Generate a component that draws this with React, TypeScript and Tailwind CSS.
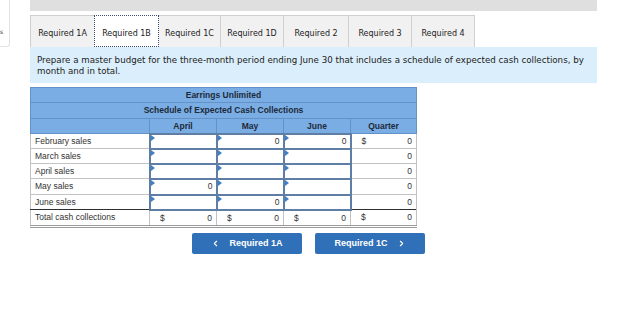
import { ChevronLeft, ChevronRight } from "lucide-react";

type Cell = { kind: "input" | "quarter"; value?: string; dollar?: boolean };
type Row = { label: string; h: string; cells: Cell[] };

const tabs = [
  { label: "Required 1A", w: "w-[65px]" },
  { label: "Required 1B", w: "w-[65px]", active: true },
  { label: "Required 1C", w: "w-[63px]" },
  { label: "Required 1D", w: "w-[64px]" },
  { label: "Required 2", w: "w-[66px]" },
  { label: "Required 3", w: "w-[64px]" },
  { label: "Required 4", w: "w-[64px]" },
];

const rows: Row[] = [
  {
    label: "February sales",
    h: "h-[15px]",
    cells: [
      { kind: "input" },
      { kind: "input", value: "0" },
      { kind: "input", value: "0" },
      { kind: "quarter", value: "0", dollar: true },
    ],
  },
  {
    label: "March sales",
    h: "h-[15px]",
    cells: [{ kind: "input" }, { kind: "input" }, { kind: "input" }, { kind: "quarter", value: "0" }],
  },
  {
    label: "April sales",
    h: "h-[15px]",
    cells: [{ kind: "input" }, { kind: "input" }, { kind: "input" }, { kind: "quarter", value: "0" }],
  },
  {
    label: "May sales",
    h: "h-[16px]",
    cells: [{ kind: "input", value: "0" }, { kind: "input" }, { kind: "input" }, { kind: "quarter", value: "0" }],
  },
  {
    label: "June sales",
    h: "h-[15px]",
    cells: [{ kind: "input" }, { kind: "input", value: "0" }, { kind: "input" }, { kind: "quarter", value: "0" }],
  },
];

function Flag() {
  return (
    <span className="absolute left-0 top-0 h-0 w-0 border-l-[4px] border-y-[3px] border-l-[#3f7fc4] border-y-transparent" />
  );
}

export default function App() {
  return (
    <div className="flex h-[331px] w-[635px] overflow-hidden bg-white text-[#222]">
      {/* left panel stub */}
      <div className="h-[47px] w-[10px] rounded-br-[3px] border-b border-r border-[#e2e2e2] pt-[29px] font-['DejaVu_Sans',sans-serif] text-[6px] leading-none">
        <span>s</span>
      </div>

      <div className="ml-[20px] flex w-[567px] flex-col">
        <div className="h-[11px] bg-[#dfdfdf]" />

        {/* tabs */}
        <div className="mt-[4px] flex h-[32px] font-['DejaVu_Sans',sans-serif] text-[8px]">
          {tabs.map((t, i) => (
            <div
              key={t.label}
              className={`${t.w} ${i > 0 ? "-ml-px" : ""} flex items-center justify-center pt-[5px] ${
                t.active
                  ? "relative z-10 border border-dotted border-[#3b4f73] bg-white"
                  : "border border-b-0 border-[#cfcfcf] bg-[#f1f1f1]"
              }`}
            >
              {t.label}
            </div>
          ))}
        </div>

        {/* instructions */}
        <div className="h-[36px] bg-[#dbeefb] px-[7px] pt-[8px] font-['DejaVu_Sans',sans-serif] text-[8.7px] leading-[11px]">
          Prepare a master budget for the three-month period ending June 30 that includes a schedule of expected cash
          collections, by month and in total.
        </div>

        {/* schedule */}
        <table className="mt-[4px] w-[386px] table-fixed border-collapse font-['Liberation_Sans',Arial,sans-serif] text-[8.5px] leading-none text-[#333]">
          <colgroup>
            <col className="w-[119px]" />
            <col className="w-[67px]" />
            <col className="w-[67px]" />
            <col className="w-[67px]" />
            <col className="w-[66px]" />
          </colgroup>
          <thead className="font-bold text-[#1d2a3a]">
            <tr className="h-[15px]">
              <th colSpan={5} className="border border-[#6392c8] bg-[#7aade3] text-center font-bold">
                Earrings Unlimited
              </th>
            </tr>
            <tr className="h-[16px]">
              <th colSpan={5} className="border border-[#6392c8] bg-[#7aade3] text-center font-bold">
                Schedule of Expected Cash Collections
              </th>
            </tr>
            <tr className="h-[15px]">
              <th className="border border-[#6392c8] bg-[#7aade3]" />
              <th className="border border-[#6392c8] bg-[#7aade3] font-bold">April</th>
              <th className="border border-[#6392c8] bg-[#7aade3] font-bold">May</th>
              <th className="border border-[#6392c8] bg-[#7aade3] font-bold">June</th>
              <th className="border border-[#6392c8] bg-[#7aade3] font-bold">Quarter</th>
            </tr>
          </thead>
          <tbody>
            {rows.map((r) => (
              <tr key={r.label} className={r.h}>
                <td className="border border-[#c3c3c3] pl-[4px]">{r.label}</td>
                {r.cells.map((c, i) =>
                  c.kind === "input" ? (
                    <td key={i} className="relative border-2 border-[#5e7ea5] bg-white p-0">
                      <Flag />
                      <div className="pr-[3px] text-right">{c.value ?? ""}</div>
                    </td>
                  ) : (
                    <td key={i} className="border border-[#c3c3c3] p-0">
                      <div className="flex justify-between pl-[10px] pr-[4px]">
                        <span>{c.dollar ? "$" : ""}</span>
                        <span>{c.value}</span>
                      </div>
                    </td>
                  )
                )}
              </tr>
            ))}
            <tr className="h-[17px]">
              <td className="border-x border-t border-b-[3px] border-x-[#c3c3c3] border-t-[#2e2e2e] border-b-[#9a9a9a] border-double pl-[4px]">
                Total cash collections
              </td>
              {[0, 1, 2, 3].map((i) => (
                <td
                  key={i}
                  className="border-x border-t border-b-[3px] border-x-[#c3c3c3] border-t-[#2e2e2e] border-b-[#9a9a9a] border-double p-0"
                >
                  <div className="flex justify-between pl-[10px] pr-[4px]">
                    <span>$</span>
                    <span>0</span>
                  </div>
                </td>
              ))}
            </tr>
          </tbody>
        </table>

        {/* navigation */}
        <div className="mt-[5px] flex gap-[13px] pl-[162px] font-['Liberation_Sans',Arial,sans-serif] text-[9px] font-bold text-white">
          <button className="flex h-[21px] w-[110px] items-center justify-center gap-[9px] rounded-[2px] bg-[#2f70b8]">
            <ChevronLeft size={9} strokeWidth={3} />
            <span>Required 1A</span>
          </button>
          <button className="flex h-[21px] w-[110px] items-center justify-center gap-[9px] rounded-[2px] bg-[#2f70b8]">
            <span>Required 1C</span>
            <ChevronRight size={9} strokeWidth={3} />
          </button>
        </div>
      </div>
    </div>
  );
}
